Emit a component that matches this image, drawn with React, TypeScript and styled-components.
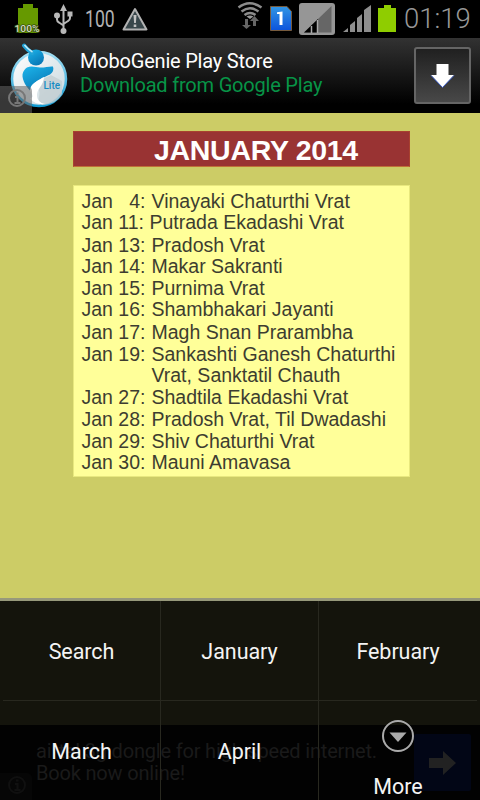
import React from 'react';
import styled, { createGlobalStyle } from 'styled-components';

const GlobalStyle = createGlobalStyle`
  * { box-sizing: border-box; }
  body { margin: 0; background: #000; font-family: Roboto, sans-serif; }
  svg { display: block; flex: none; }
`;

const Screen = styled.main`
  width: 480px;
  height: 800px;
  display: flex;
  flex-direction: column;
  overflow: hidden;
  background: #cccc66;
`;

const StatusBar = styled.header`
  height: 38px;
  flex: none;
  display: flex;
  justify-content: space-between;
  background: #000;
`;

const StatusGroup = styled.div`
  display: flex;
  align-items: flex-start;
`;

const StatusText = styled.span<{ $size: number; $color: string; $width: number; $weight: number; $scale: number }>`
  width: ${p => p.$width}px;
  flex: none;
  font-size: ${p => p.$size}px;
  line-height: 38px;
  font-weight: ${p => p.$weight};
  color: ${p => p.$color};
  transform: scaleX(${p => p.$scale});
  transform-origin: left;
  white-space: nowrap;
`;

const AdBanner = styled.section`
  height: 75px;
  flex: none;
  display: flex;
  background: linear-gradient(#333 0, #303030 3px, #000 88%);
`;

const AdCopy = styled.div`
  width: 334px;
  padding-top: 11px;
`;

const AdLine = styled.div<{ $color: string }>`
  height: 24px;
  line-height: 24px;
  font-size: 20px;
  color: ${p => p.$color};
  letter-spacing: -0.2px;
  white-space: nowrap;
`;

const DownloadButton = styled.button`
  width: 57px;
  height: 57px;
  margin-top: 9px;
  padding: 0;
  display: flex;
  align-items: center;
  justify-content: center;
  border: 2px solid #656565;
  border-radius: 3px;
  background: linear-gradient(#202020, #484848);
`;

const Calendar = styled.section`
  height: 485px;
  flex: none;
  padding: 18px 70px 0 73px;
  background: #cccc66;
`;

const MonthTitle = styled.h1`
  height: 36px;
  margin: 0 0 18px;
  padding-left: 80px;
  border: 1px solid #a8412f;
  border-bottom-color: #c07038;
  background: #993333;
  color: #fff;
  font: bold 28.5px/37px 'Liberation Sans', sans-serif;
  letter-spacing: -0.3px;
  white-space: nowrap;
`;

const EventList = styled.ul`
  height: 292px;
  margin: 0;
  padding: 4px 0 0 7.500px;
  list-style: none;
  border: 1px solid #e8e87e;
  background: #ffff99;
  color: #3d3d30;
  font: 19.5px/22px 'Liberation Sans', sans-serif;
`;

const EventRow = styled.li<{ $height: number }>`
  height: ${p => p.$height}px;
  display: flex;
  white-space: pre;
`;

const EventDate = styled.span<{ $narrow?: boolean }>`
  width: ${p => (p.$narrow ? 68 : 70)}px;
  flex: none;
`;

const OptionsPanel = styled.section`
  position: relative;
  height: 202px;
  flex: none;
  border-top: 3px solid #97997b;
  background: linear-gradient(#14140c 0 124px, #020202 124px);
`;

const DimmedAd = styled.div`
  position: absolute;
  inset: 124px 0 0;
  display: flex;
  padding-left: 36px;
`;

const DimmedCopy = styled.p`
  width: 378px;
  margin: 15px 0 0;
  font-size: 20px;
  line-height: 22px;
  letter-spacing: -0.18px;
  color: #1a1a1a;
`;

const DimmedButton = styled.div`
  width: 57px;
  height: 57px;
  margin-top: 9px;
  display: flex;
  align-items: center;
  justify-content: center;
  border-radius: 2px;
  background: #020616;
`;

const InfoTag = styled.span<{ $dim?: boolean }>`
  position: absolute;
  left: 0;
  bottom: 0;
  width: 32px;
  height: 27px;
  padding: 3px 0 0 8px;
  border-top-right-radius: 5px;
  color: ${p => (p.$dim ? '#101010' : '#777')};
  background: ${p => (p.$dim ? '#060606' : 'rgba(100, 100, 100, 0.55)')};
`;

const LogoBox = styled.div`
  position: relative;
  width: 80px;
  height: 75px;
  flex: none;
`;

const OptionsGrid = styled.nav`
  position: relative;
  height: 199px;
  padding: 0 3px;
  display: grid;
  grid-template-columns: 158px 158px 158px;
  grid-template-rows: 100px 99px;
`;

const Option = styled.button<{ $right?: boolean; $bottom?: boolean }>`
  padding: 2px 0 0;
  border: 0 solid #28281f;
  border-right-width: ${p => (p.$right ? 1 : 0)}px;
  border-bottom-width: ${p => (p.$bottom ? 1 : 0)}px;
  background: transparent;
  color: #f4f4f4;
  font: 21.5px/24px Roboto, sans-serif;
  letter-spacing: -0.05px;
  display: flex;
  flex-direction: column;
  align-items: center;
  justify-content: center;
`;

const MoreOption = styled(Option)`
  justify-content: flex-start;
  gap: 22px;
  padding-top: 18px;
`;

const events = [
  { date: 'Jan   4:', name: 'Vinayaki Chaturthi Vrat', height: 21 },
  { date: 'Jan 11:', name: 'Putrada Ekadashi Vrat', height: 23, narrow: true },
  { date: 'Jan 13:', name: 'Pradosh Vrat', height: 21 },
  { date: 'Jan 14:', name: 'Makar Sakranti', height: 22 },
  { date: 'Jan 15:', name: 'Purnima Vrat', height: 21 },
  { date: 'Jan 16:', name: 'Shambhakari Jayanti', height: 23 },
  { date: 'Jan 17:', name: 'Magh Snan Prarambha', height: 22 },
  { date: 'Jan 19:', name: 'Sankashti Ganesh Chaturthi', height: 21 },
  { date: '', name: 'Vrat, Sanktatil Chauth', height: 22 },
  { date: 'Jan 27:', name: 'Shadtila Ekadashi Vrat', height: 22 },
  { date: 'Jan 28:', name: 'Pradosh Vrat, Til Dwadashi', height: 22 },
  { date: 'Jan 29:', name: 'Shiv Chaturthi Vrat', height: 21 },
  { date: 'Jan 30:', name: 'Mauni Amavasa', height: 22 },
];

const InfoIcon = () => (
  <svg width="19" height="20" viewBox="0 0 19 20" fill="none" stroke="currentColor" strokeWidth="2">
    <circle cx="9" cy="9" r="8" />
    <path d="M7 8h2.500v6M6.500 14h6M8 4.500h2.500" />
  </svg>
);

const LeftStatusIcons = () => (
  <svg width="85" height="38" viewBox="0 0 85 38">
    <path d="M18 8h5V4h10v4h5v25H18z" fill="#669900" />
    <text x="14.500" y="32" fontFamily="Roboto" fontSize="9.500" fontWeight="500" fill="#d4dcc0" stroke="#385010" strokeWidth="1.500" paintOrder="stroke" textLength="25" lengthAdjust="spacingAndGlyphs">100%</text>
    <path d="M63.500 8v23M57 16v3.500q0 2 2 3l4.500 3M70 15v3q0 2-2 3l-4.500 3" fill="none" stroke="#b8b8b8" strokeWidth="2" />
    <g fill="#b8b8b8">
      <path d="M63.500 4l3.500 7h-7zM67.500 11.500h5v5h-5z" />
      <circle cx="57" cy="15.500" r="3" />
      <circle cx="63.500" cy="31" r="3" />
    </g>
  </svg>
);

const WarningIcon = () => (
  <svg width="28" height="38" viewBox="0 0 28 38">
    <path d="M13 9L24.500 29.500H1.500z" fill="#39474b" stroke="#b2b2b2" strokeWidth="2" strokeLinejoin="round" />
    <path d="M11.500 15h3l-.6 8h-1.800zM11.700 24.500h2.600V27h-2.600z" fill="#c2c2c2" />
  </svg>
);

const RightStatusIcons = () => (
  <svg width="168" height="38" viewBox="236 0 168 38">
    <g fill="none" stroke="#8c8c8c" strokeWidth="2.500">
      <path d="M238.500 7.500q11-8.500 23 0M241.500 11.500q8.500-6.500 17 0M244.500 15q5.500-4 11 0" />
    </g>
    <path d="M246.500 16.500q3.500-2 7 0l-3.500 2.500z" fill="#999" />
    <path d="M245 19h3v6h3l-4.500 4-4.500-4h3zM254.500 16l4.500 5h-3v5h-3v-5h-3z" fill="#666" />
    <defs>
      <linearGradient id="sim" x2="0" y2="1"><stop stopColor="#3296e4" /><stop offset="1" stopColor="#0c53dc" /></linearGradient>
    </defs>
    <path d="M270.500 6.500H287l4.500 5V30.500h-21z" fill="url(#sim)" stroke="#765a3c" />
    <path d="M277 14v-1.800l5.500-.7V25h-3V14z" fill="#fff" />
    <rect x="299" y="3" width="36" height="32" rx="3" fill="#969696" />
    <path d="M304 32.500L331.500 6v26.500z" fill="#666" />
    <path d="M304 32.500L318 19v13.500z" fill="#000" />
    <path d="M311.500 26v7M317.500 20v13" stroke="#aaa" strokeWidth="1.500" />
    <path d="M343 32l5-4v4zM350 32v-7l5-4v11zM357 32V18l5-4v18zM364 32V10l7-5v27z" fill="#8e8e8e" />
    <path d="M378 8h6V5h7v3h5v24h-18z" fill="#8fcd00" />
  </svg>
);

const GenieLogo = () => (
  <svg width="80" height="75" viewBox="0 0 80 75">
    <defs>
      <linearGradient id="ring" x2="0" y2="1"><stop stopColor="#a5dff3" /><stop offset="1" stopColor="#129bd3" /></linearGradient>
      <linearGradient id="orb" x2="1" y2="1"><stop stopColor="#fff" /><stop offset="1" stopColor="#c5d5dc" /></linearGradient>
      <linearGradient id="blue" x2=".6" y2="1"><stop stopColor="#1db5eb" /><stop offset="1" stopColor="#0878b6" /></linearGradient>
    </defs>
    <circle cx="39" cy="41" r="27" fill="url(#orb)" stroke="url(#ring)" strokeWidth="2.500" />
    <path d="M51 37c-6 3-13 6-16 12 5 2 5 6 4 10-1 3 1 6 3 8 9 0 16-4 20-11V43z" fill="#c3ced2" opacity=".8" />
    <path d="M27 29.500c5-2 9 0 13 0 6 0 10-1.500 13-1 1 3 0 6-3 8-6 3-14 5-17 11-1 3-2 4-3 5-5-5-9-13-7-18 1-2 2-4 4-5z" fill="url(#blue)" />
    <path d="M30 53c0-8 7-9 12-13 3-2 2 0 1 4-2 5-6 8-6 13s3 8 8 9c-8 1-14-3-15-6 3 0 4-2 0-7z" fill="#fff" />
    <circle cx="36" cy="19.500" r="8" fill="url(#blue)" />
    <path d="M24 7.500q3 4 8 7.500" fill="none" stroke="#23a4d8" strokeWidth="4" strokeLinecap="round" />
    <path d="M24.500 7q3 4 8 7" fill="none" stroke="#c0ecfa" strokeWidth="1.500" />
    <text x="43.500" y="51" fontFamily="Roboto" fontSize="11" fontWeight="500" fill="#168bc4" textLength="16.500" lengthAdjust="spacingAndGlyphs">Lite</text>
  </svg>
);

export default function App() {
  return (
    <>
      <GlobalStyle />
      <Screen>
        <StatusBar>
          <StatusGroup>
            <LeftStatusIcons />
            <StatusText $size={23.5} $color="#b0b0b0" $width={37} $weight={400} $scale={0.75}>100</StatusText>
            <WarningIcon />
          </StatusGroup>
          <StatusGroup>
            <RightStatusIcons />
            <StatusText $size={27} $color="#989898" $width={76} $weight={300} $scale={1.02}>01:19</StatusText>
          </StatusGroup>
        </StatusBar>
        <AdBanner>
          <LogoBox>
            <GenieLogo />
            <InfoTag><InfoIcon /></InfoTag>
          </LogoBox>
          <AdCopy>
            <AdLine $color="#fff">MoboGenie Play Store</AdLine>
            <AdLine $color="#079447">Download from Google Play</AdLine>
          </AdCopy>
          <DownloadButton aria-label="Download">
            <svg width="25" height="26" viewBox="0 0 25 26">
              <path d="M6.500 1h12v11H24L12.500 24.500 1 12h5.500z" fill="#fff" />
              <path d="M1 12.500l11.500 12L24 12.500" fill="none" stroke="#3a5ac0" />
            </svg>
          </DownloadButton>
        </AdBanner>
        <Calendar>
          <MonthTitle>JANUARY 2014</MonthTitle>
          <EventList>
            {events.map(e => (
              <EventRow key={e.name} $height={e.height}>
                <EventDate $narrow={e.narrow}>{e.date}</EventDate>
                <span>{e.name}</span>
              </EventRow>
            ))}
          </EventList>
        </Calendar>
        <OptionsPanel>
          <DimmedAd>
            <DimmedCopy>airtel 3g dongle for high speed internet.<br />Book now online!</DimmedCopy>
            <DimmedButton>
              <svg width="27" height="24" viewBox="0 0 27 24"><path d="M0 7h14V0l13 12-13 12v-7H0z" fill="#222" /></svg>
            </DimmedButton>
            <InfoTag $dim><InfoIcon /></InfoTag>
          </DimmedAd>
          <OptionsGrid>
            <Option $right $bottom>Search</Option>
            <Option $right $bottom>January</Option>
            <Option $bottom>February</Option>
            <Option $right>March</Option>
            <Option $right>April</Option>
            <MoreOption>
              <svg width="34" height="34" viewBox="0 0 34 34">
                <circle cx="17" cy="17" r="15" fill="none" stroke="#aaa" strokeWidth="2" />
                <path d="M8.500 13.500h17L17 23z" fill="#aaa" />
              </svg>
              More
            </MoreOption>
          </OptionsGrid>
        </OptionsPanel>
      </Screen>
    </>
  );
}
